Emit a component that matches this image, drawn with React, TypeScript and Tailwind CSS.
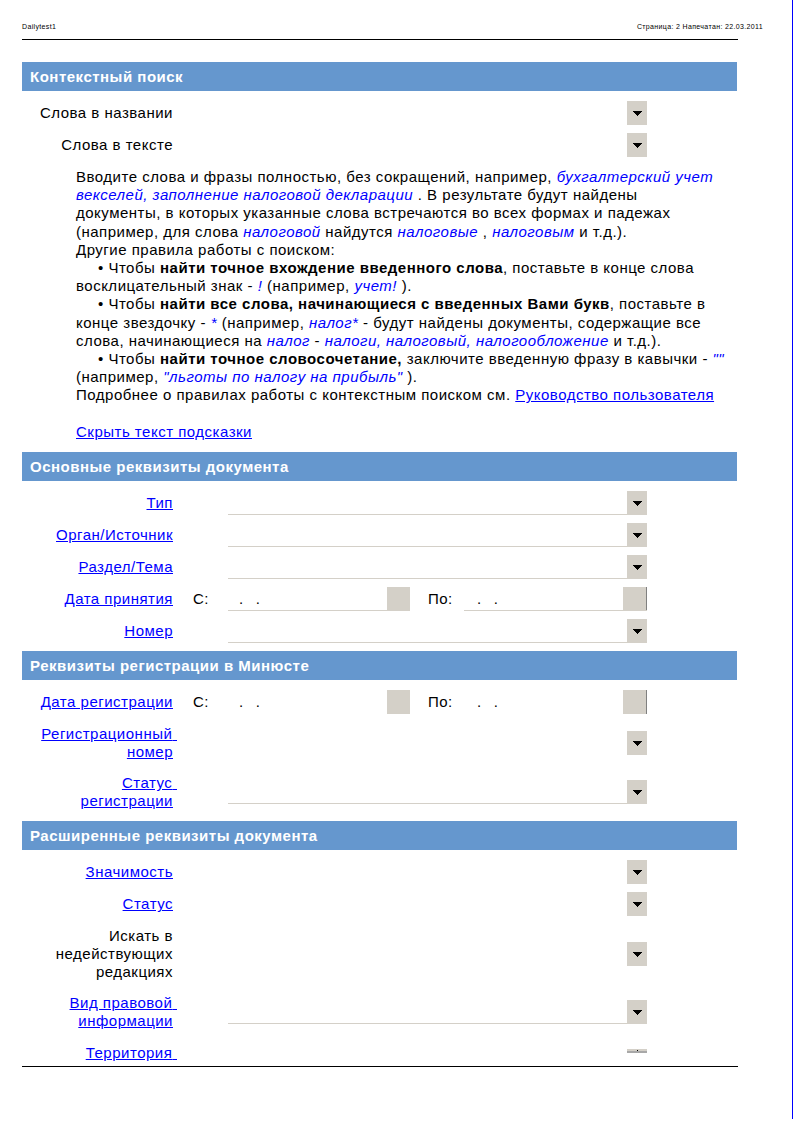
import type { ReactNode } from 'react'

const LINK = 'text-[#0000ff] underline'
const HINT = 'text-[#0000ff] italic'

function Arrow() {
  return (
    <svg width="9" height="5" viewBox="0 0 9 5" shapeRendering="crispEdges">
      <path d="M0 0h9v1h-1v1h-1v1h-1v1h-1v1h-1v-1h-1v-1h-1v-1h-1v-1h-1z" fill="#000" />
    </svg>
  )
}

function DropButton() {
  return (
    <div className="w-[20px] h-[24px] shrink-0 bg-[#d4d0c8] flex items-center justify-center">
      <Arrow />
    </div>
  )
}

function SectionBar({ title, className = '' }: { title: string; className?: string }) {
  return (
    <div className={`w-[715px] h-[29px] bg-[#6597ce] flex items-center pl-[8px] pt-[1px] text-[15px] tracking-[0.5px] font-bold text-white ${className}`}>
      {title}
    </div>
  )
}

function Label({ children }: { children: ReactNode }) {
  return <div className="w-[151px] shrink-0 text-right text-[15px] tracking-[0.5px] leading-[18px]">{children}</div>
}

function ComboRow({ label, underline = false, className = '' }: { label: ReactNode; underline?: boolean; className?: string }) {
  return (
    <div className={`flex items-center ${className}`}>
      <Label>{label}</Label>
      <div className={`ml-[55px] w-[399px] h-[24px] ${underline ? 'border-b border-[#d4d0c8]' : ''}`} />
      <DropButton />
    </div>
  )
}

function DateField({ underline, last = false }: { underline: boolean; last?: boolean }) {
  return (
    <div className={`flex h-[24px] ${underline ? 'border-b border-[#d4d0c8]' : ''} ${last ? 'w-[183px]' : 'w-[182px]'}`}>
      <div className={`flex-1 flex items-center gap-[12px] text-[15px] leading-[18px] ${last ? 'pl-[13px]' : 'pl-[11px]'}`}>
        <span>.</span>
        <span>.</span>
      </div>
      <div className={`h-full bg-[#d4d0c8] ${last ? 'w-[24px] border-r border-[#808080]' : 'w-[23px]'}`} />
    </div>
  )
}

function DateRow({ label, underline, className = '' }: { label: ReactNode; underline: boolean; className?: string }) {
  return (
    <div className={`flex items-center text-[15px] tracking-[0.5px] leading-[18px] ${className}`}>
      <Label>{label}</Label>
      <div className="w-[55px] pl-[20px]">С:</div>
      <DateField underline={underline} />
      <div className="w-[54px] pl-[18px]">По:</div>
      <DateField underline={underline} last />
    </div>
  )
}

function HelpText() {
  return (
    <div className="ml-[54px] w-[680px] mt-[11px] text-[15px] tracking-[0.5px] leading-[18.2px] whitespace-pre">
      <div>
        {'Вводите слова и фразы полностью, без сокращений, например, '}
        <span className={HINT}>бухгалтерский учет</span>
      </div>
      <div>
        <span className={HINT}>векселей, заполнение налоговой декларации</span>
        {' . В результате будут найдены'}
      </div>
      <div>документы, в которых указанные слова встречаются во всех формах и падежах</div>
      <div>
        {'(например, для слова '}
        <span className={HINT}>налоговой</span>
        {' найдутся '}
        <span className={HINT}>налоговые</span>
        {' , '}
        <span className={HINT}>налоговым</span>
        {' и т.д.).'}
      </div>
      <div>Другие правила работы с поиском:</div>
      <div className="pl-[22px]">
        {'• Чтобы '}
        <b>найти точное вхождение введенного слова</b>
        {', поставьте в конце слова'}
      </div>
      <div>
        {'восклицательный знак - '}
        <span className={HINT}>!</span>
        {' (например, '}
        <span className={HINT}>учет!</span>
        {' ).'}
      </div>
      <div className="pl-[22px]">
        {'• Чтобы '}
        <b>найти все слова, начинающиеся с введенных Вами букв</b>
        {', поставьте в'}
      </div>
      <div>
        {'конце звездочку - '}
        <span className={HINT}>*</span>
        {' (например, '}
        <span className={HINT}>налог*</span>
        {' - будут найдены документы, содержащие все'}
      </div>
      <div>
        {'слова, начинающиеся на '}
        <span className={HINT}>налог</span>
        {' - '}
        <span className={HINT}>налоги, налоговый, налогообложение</span>
        {' и т.д.).'}
      </div>
      <div className="pl-[22px]">
        {'• Чтобы '}
        <b>найти точное словосочетание,</b>
        {' заключите введенную фразу в кавычки - '}
        <span className={HINT}>""</span>
      </div>
      <div>
        {'(например, '}
        <span className={HINT}>"льготы по налогу на прибыль"</span>
        {' ).'}
      </div>
      <div>
        {'Подробнее о правилах работы с контекстным поиском см. '}
        <a className={LINK}>Руководство пользователя</a>
      </div>
      <div>{' '}</div>
      <div>
        <a className={LINK}>Скрыть текст подсказки</a>
      </div>
    </div>
  )
}

export default function App() {
  return (
    <div className="w-[793px] h-[1119px] bg-white border-r border-[#0000ff] text-black font-['Liberation_Sans',Arial,sans-serif]">
      {/* Page header */}
      <div className="ml-[22px] w-[741px] pt-[22px] flex justify-between text-[7px] tracking-[0.35px] leading-[10px]">
        <span>Dailytest1</span>
        <span>Страница: 2 Напечатан: 22.03.2011</span>
      </div>
      <div className="ml-[22px] w-[716px] mt-[7px] h-px bg-black" />

      <div className="ml-[22px] w-[716px]">
        <SectionBar title="Контекстный поиск" className="mt-[22px]" />
        <ComboRow label="Слова в названии" className="mt-[10px]" />
        <ComboRow label="Слова в тексте" className="mt-[8px]" />
        <HelpText />

        <SectionBar title="Основные реквизиты документа" className="mt-[11px]" />
        <ComboRow label={<a className={LINK}>Тип</a>} underline className="mt-[10px]" />
        <ComboRow label={<a className={LINK}>Орган/Источник</a>} underline className="mt-[8px]" />
        <ComboRow label={<a className={LINK}>Раздел/Тема</a>} underline className="mt-[8px]" />
        <DateRow label={<a className={LINK}>Дата принятия</a>} underline className="mt-[8px]" />
        <ComboRow label={<a className={LINK}>Номер</a>} underline className="mt-[8px]" />

        <SectionBar title="Реквизиты регистрации в Минюсте" className="mt-[8px]" />
        <DateRow label={<a className={LINK}>Дата регистрации</a>} underline={false} className="mt-[10px]" />
        <ComboRow
          label={
            <>
              <a className={`${LINK} mr-[-4px]`}>Регистрационный{'\u00a0'}</a>
              <br />
              <a className={LINK}>номер</a>
            </>
          }
          className="mt-[11px]"
        />
        <ComboRow
          label={
            <>
              <a className={`${LINK} mr-[-4px]`}>Статус{'\u00a0'}</a>
              <br />
              <a className={LINK}>регистрации</a>
            </>
          }
          underline
          className="mt-[13px]"
        />

        <SectionBar title="Расширенные реквизиты документа" className="mt-[11px]" />
        <ComboRow label={<a className={LINK}>Значимость</a>} className="mt-[10px]" />
        <ComboRow label={<a className={LINK}>Статус</a>} className="mt-[8px]" />
        <ComboRow
          label={
            <>
              Искать в<br />
              недействующих<br />
              редакциях
            </>
          }
          className="mt-[11px]"
        />
        <ComboRow
          label={
            <>
              <a className={`${LINK} mr-[-4px]`}>Вид правовой{'\u00a0'}</a>
              <br />
              <a className={LINK}>информации</a>
            </>
          }
          underline
          className="mt-[13px]"
        />
        <div className="flex items-start mt-[14px]">
          <Label>
            <a className={`${LINK} mr-[-4px]`}>Территория{'\u00a0'}</a>
          </Label>
          <div className="ml-[55px] w-[399px]" />
          <div className="mt-[5px] w-[20px] h-[4px] bg-[#d4d0c8] border-b-2 border-[#a8a8a8] flex justify-center">
            <div className="mt-[1px] w-px h-px bg-black" />
          </div>
        </div>
        <div className="mt-[4px] h-px bg-black" />
      </div>
    </div>
  )
}
